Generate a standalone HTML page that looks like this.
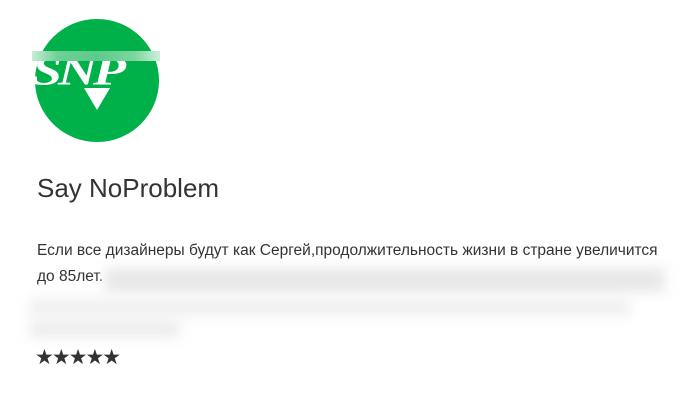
<!DOCTYPE html><html><head><style>
body{margin:0;width:693px;height:401px;background:#fff;overflow:hidden;position:relative;font-family:"Liberation Sans",sans-serif}
.c{position:absolute;left:35px;top:19px;width:124px;height:123px;border-radius:50%;background:#00b14a}
.band{position:absolute;left:32px;top:51px;width:128px;height:10px;background:linear-gradient(90deg,#c9ecd5,#6fd095 20%,#5ccb8a 50%,#7dd59f 80%,#cfeedb)}
.t{position:absolute;color:#fff;font-family:"Liberation Serif",serif;font-weight:bold;font-style:italic;font-size:54px;left:32px;top:40px;letter-spacing:-4px;transform:scaleY(0.75);overflow:hidden;width:126px;white-space:nowrap}
.v{position:absolute;left:84px;top:88px;width:0;height:0;border-left:13px solid transparent;border-right:13px solid transparent;border-top:22px solid #fff}
h1{position:absolute;left:37px;top:173px;margin:0;font-weight:normal;font-size:26px;color:#333}
p{position:absolute;left:37px;margin:0;font-size:15.5px;color:#333;white-space:nowrap}
.b{position:absolute;filter:blur(6px)}
.s{position:absolute;left:35px;top:345px;font-size:21px;color:#333;letter-spacing:-2px}
</style></head><body>
<div class="c"></div><div class="t">SNP</div><div class="v"></div><div class="band"></div>
<h1>Say NoProblem</h1>
<p style="top:242px">Если все дизайнеры будут как Сергей,продолжительность жизни в стране увеличится</p>
<p style="top:268px">до 85лет.</p>
<div class="b" style="left:105px;top:268px;width:560px;height:24px;background:#e8e8e8"></div>
<div class="b" style="left:30px;top:298px;width:600px;height:18px;background:#f0f0f0"></div>
<div class="b" style="left:30px;top:320px;width:150px;height:18px;background:#ededed"></div>
<div class="s">★★★★★</div>
</body></html>
